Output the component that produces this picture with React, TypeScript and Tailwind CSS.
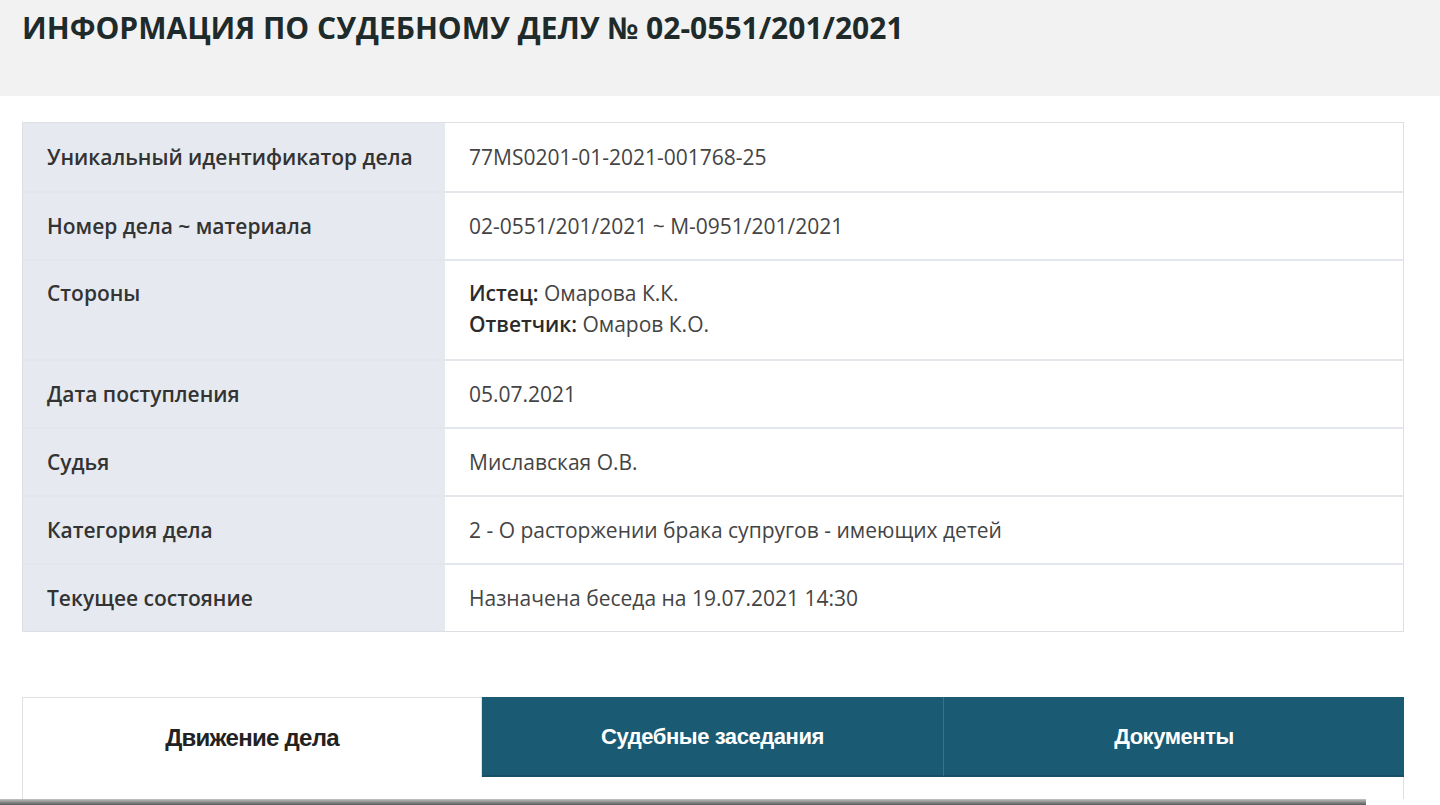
import React from "react";

const rows: { label: string; value: React.ReactNode; tall?: boolean }[] = [
  { label: "Уникальный идентификатор дела", value: "77MS0201-01-2021-001768-25" },
  { label: "Номер дела ~ материала", value: "02-0551/201/2021 ~ М-0951/201/2021" },
  {
    label: "Стороны",
    tall: true,
    value: (
      <>
        <div>
          <b className="font-semibold text-[#2b2b2b]">Истец:</b> Омарова К.К.
        </div>
        <div>
          <b className="font-semibold text-[#2b2b2b]">Ответчик:</b> Омаров К.О.
        </div>
      </>
    ),
  },
  { label: "Дата поступления", value: "05.07.2021" },
  { label: "Судья", value: "Миславская О.В." },
  { label: "Категория дела", value: "2 - О расторжении брака супругов - имеющих детей" },
  { label: "Текущее состояние", value: "Назначена беседа на 19.07.2021 14:30" },
];

export default function App() {
  return (
    <div className="w-[1440px] h-[805px] overflow-hidden bg-white font-['Open_Sans',sans-serif]">
      {/* шапка */}
      <div className="h-[96px] bg-[#f2f2f2] px-[22px] pt-[8px]">
        <h1 className="text-[30px] leading-[40px] font-bold text-[#1e2b2a]">
          ИНФОРМАЦИЯ ПО СУДЕБНОМУ ДЕЛУ № 02-0551/201/2021
        </h1>
      </div>

      <div className="px-[22px] pt-[26px]">
        {/* таблица */}
        <div className="border border-[#dcdfe3] w-[1382px]">
          {rows.map((r, i) => (
            <div
              key={r.label}
              className={
                "flex text-[21px] leading-[31px] " +
                (i > 0 ? "border-t-2 border-[#e3e6ea] " : "") +
                (r.tall ? "h-[100px]" : "h-[68px]")
              }
            >
              <div
                className={
                  "w-[422px] shrink-0 bg-[#e6eaf0] px-[24px] font-semibold text-[#333] flex " +
                  (r.tall ? "items-start pt-[17px]" : "items-center")
                }
              >
                {r.label}
              </div>
              <div
                className={
                  "flex-1 px-[24px] text-[#444] " +
                  (r.tall ? "pt-[17px]" : "flex items-center")
                }
              >
                {r.value}
              </div>
            </div>
          ))}
        </div>

        {/* вкладки */}
        <div className="mt-[65px] w-[1382px] flex h-[80px] font-['Liberation_Sans',Arial,sans-serif] font-bold">
          <div className="w-[460px] border border-b-0 border-[#e0e0e0] flex items-center justify-center text-[#222] text-[24px] tracking-[-0.03em]">
            Движение дела
          </div>
          <div className="w-[461px] bg-[#1a5a73] border-b-2 border-[#164f66] flex items-center justify-center text-white text-[22px] tracking-[-0.02em]">
            Судебные заседания
          </div>
          <div className="flex-1 bg-[#1a5a73] border-l border-[#3a7388] border-b-2 border-b-[#164f66] flex items-center justify-center text-white text-[22px] tracking-[-0.02em]">
            Документы
          </div>
        </div>
        <div className="w-[1382px] h-[22px] border-l border-r border-[#e0e0e0]" />
      </div>
      <div className="w-[1366px] h-[7px] bg-gradient-to-b from-[#c4c4c4] to-[#4a4a4a]" />
    </div>
  );
}
